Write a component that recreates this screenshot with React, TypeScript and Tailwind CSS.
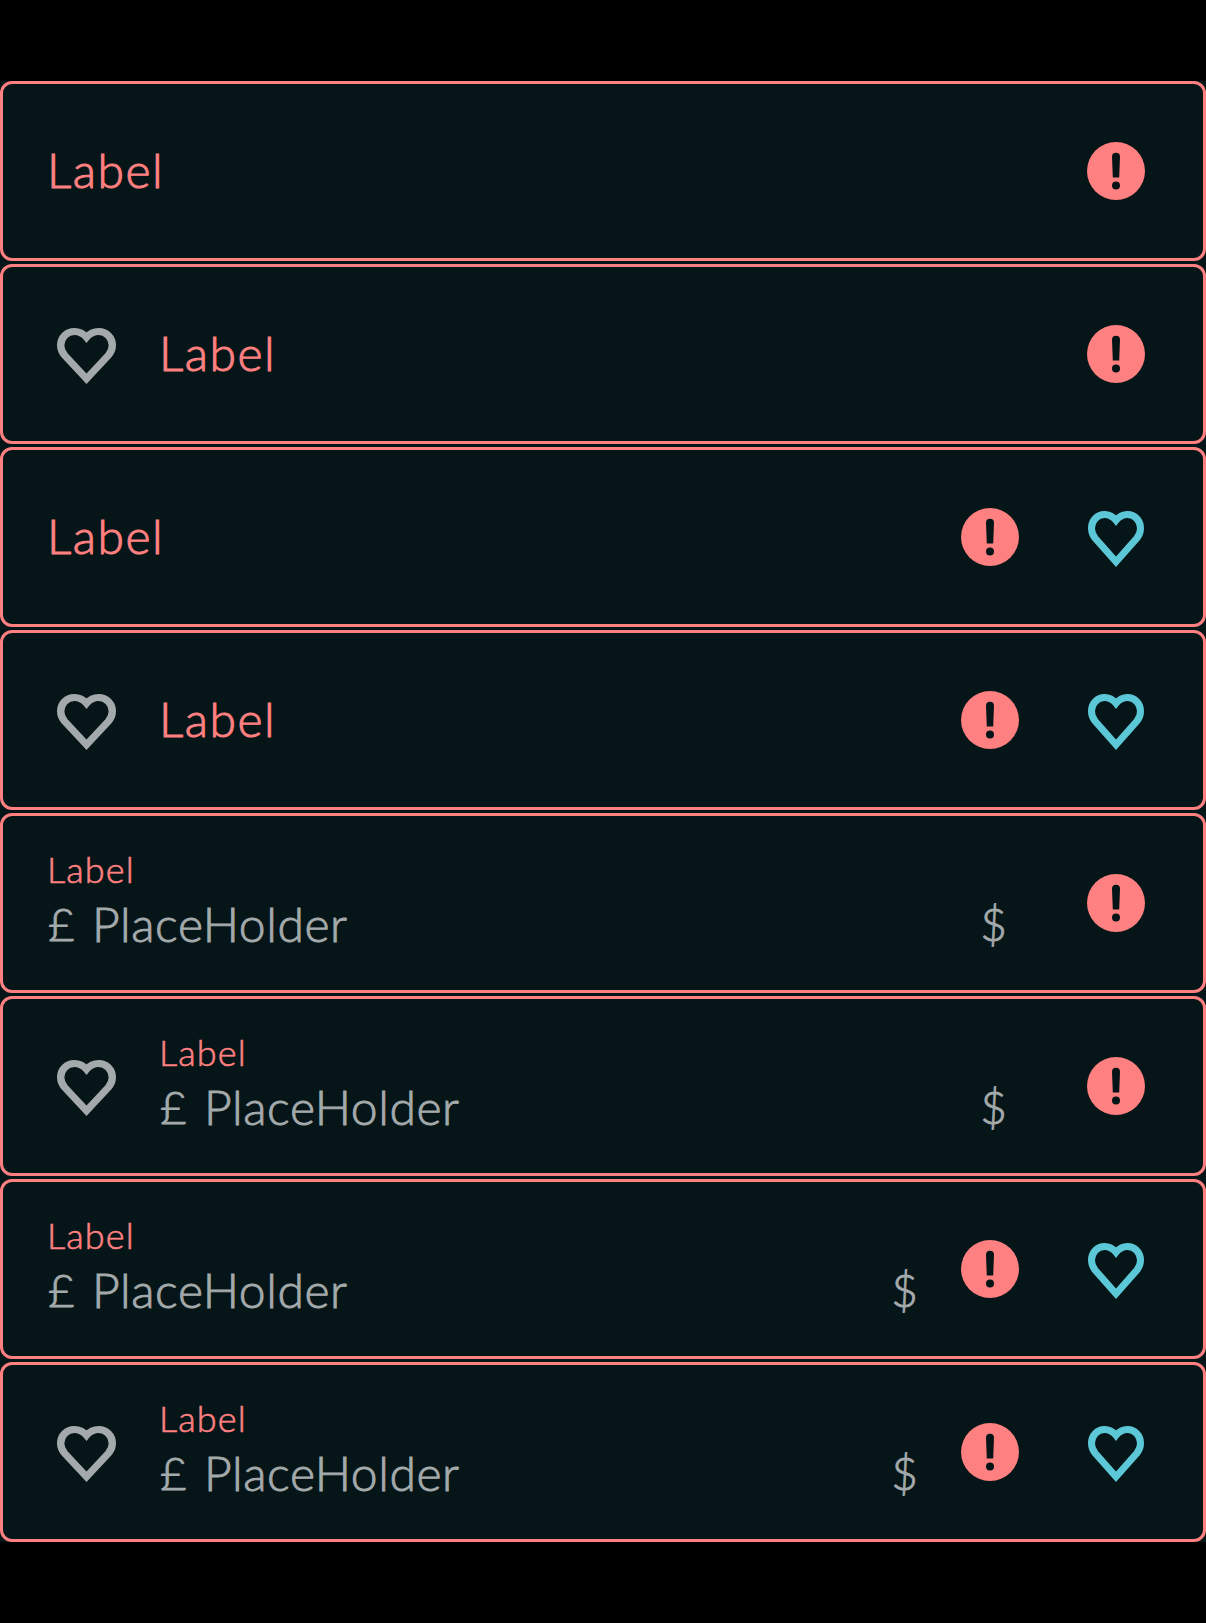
type RowProps = { leading?: boolean; trailing?: boolean; filled?: boolean };

function Heart({ className }: { className: string }) {
  return (
    <svg viewBox="0 0 56 56" preserveAspectRatio="none" fill="none" stroke="currentColor" strokeWidth="7" className={className}>
      <path d="M28 50.7 L7.2 27.2 C4.7 24.2 3.5 21.2 3.5 17.3 C3.5 9.6 9.3 3.5 16.5 3.5 C21.3 3.5 25 5.7 28 9.4 C31 5.7 34.7 3.5 39.5 3.5 C46.7 3.5 52.5 9.6 52.5 17.3 C52.5 21.2 51.3 24.2 48.8 27.2 Z" />
    </svg>
  );
}

function ErrorIcon() {
  return (
    <svg viewBox="0 0 58 58" className="h-[58px] w-[58px] shrink-0">
      <circle cx="29" cy="29" r="29" fill="#ff8080" />
      <path d="M25 14.8 a4 4 0 0 1 8 0 L32.2 35.4 H25.8 Z" fill="#051517" />
      <circle cx="29" cy="43.4" r="4" fill="#051517" />
    </svg>
  );
}

function Field({ leading, trailing, filled }: RowProps) {
  return (
    <div className={`flex h-[180px] items-center rounded-[12px] border-[3px] border-[#ff8080] pl-[44px] ${trailing ? "pr-[59px]" : "pr-[58px]"}`}>
      {leading && <Heart className="mt-1 mr-[43.5px] ml-[9.5px] h-14 w-[59px] shrink-0 text-[#a4aaab]" />}
      {filled ? (
        <div className="flex flex-1 flex-col pb-[9px]">
          <span className="-mt-px h-[51px] text-[36px] leading-[50px] tracking-[1.1px] text-[#ff8080] [-webkit-text-stroke:0.6px_currentColor]">Label</span>
          <div className="flex h-[58px] items-center text-[48px] leading-[58px] text-[#a4aaab] [-webkit-text-stroke:0.9px_currentColor]">
            <span className="w-[45px] pl-px text-[46px]">£</span>
            <span className="flex-1 tracking-[0.6px]">PlaceHolder</span>
            <span className={trailing ? "mr-[43px] text-[46px]" : "mr-[80px] text-[46px]"}>$</span>
          </div>
        </div>
      ) : (
        <span className="flex-1 pb-[3px] text-[48px] leading-[58px] tracking-[1.5px] text-[#ff8080] [-webkit-text-stroke:1px_currentColor]">Label</span>
      )}
      <ErrorIcon />
      {trailing && <Heart className="mt-1 ml-[69px] h-14 w-14 shrink-0 text-[#5cc8d7]" />}
    </div>
  );
}

const rows: RowProps[] = [
  {},
  { leading: true },
  { trailing: true },
  { leading: true, trailing: true },
  { filled: true },
  { leading: true, filled: true },
  { trailing: true, filled: true },
  { leading: true, trailing: true, filled: true },
];

export default function App() {
  return (
    <div className="min-h-[1623px] w-[1206px] bg-black pt-[81px] font-['Lato',sans-serif] font-light">
      <div className="flex flex-col gap-[3px] bg-[#061518]">
        {rows.map((row, i) => (
          <Field key={i} {...row} />
        ))}
      </div>
    </div>
  );
}
